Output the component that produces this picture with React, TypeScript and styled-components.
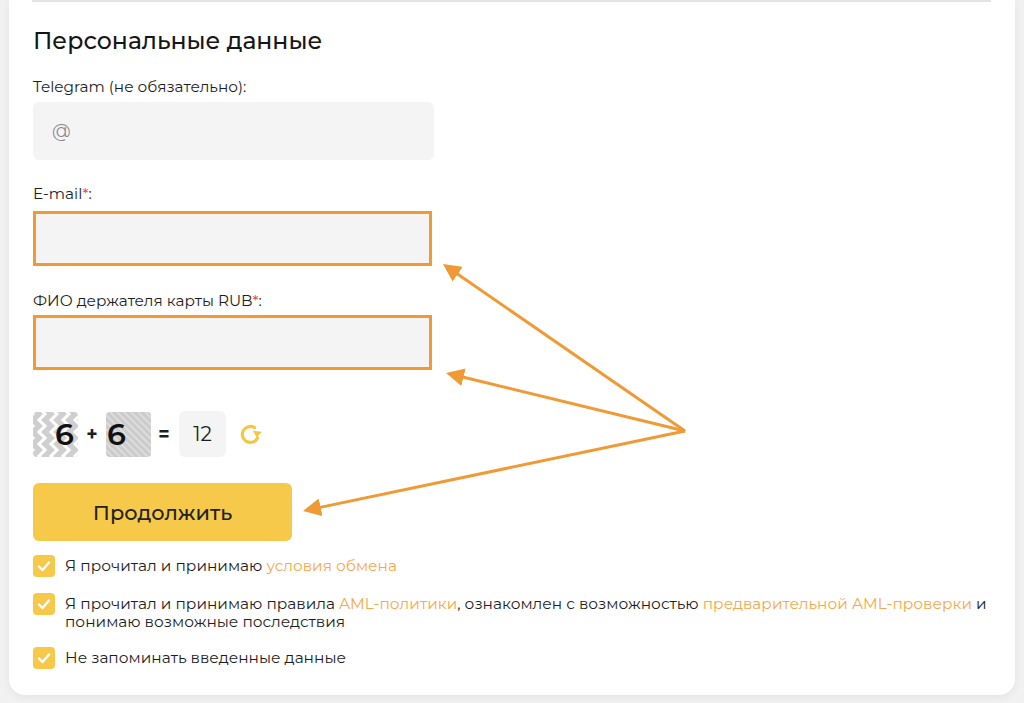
import React from 'react'
import styled, { createGlobalStyle } from 'styled-components'

const GlobalStyle = createGlobalStyle`
  body {
    margin: 0;
    background: #f1f1f1;
    font-family: 'Montserrat', 'Noto Sans', 'Liberation Sans', sans-serif;
    color: #1d1d1d;
  }
`

const Page = styled.div`
  padding: 0 9px 9px 9px;
`

const Card = styled.div`
  position: relative;
  background: #fff;
  border-radius: 0 0 16px 16px;
  box-shadow: 0 2px 8px rgba(0, 0, 0, 0.06);
  padding: 0 24px 26px 23px;
`

const Divider = styled.div`
  height: 2px;
  background: #e3e3e3;
`

const Title = styled.h2`
  margin: 25px 0 0 1px;
  font-size: 23.6px;
  line-height: 28px;
  font-weight: 500;
  color: #161616;
`

const Field = styled.div<{ $top: number }>`
  margin-top: ${(p) => p.$top}px;
  padding-left: 1px;
`

const Label = styled.div<{ $gap: number }>`
  font-size: 15.3px;
  line-height: 18px;
  margin-bottom: ${(p) => p.$gap}px;
`

const Star = styled.span`
  color: #ef3b3b;
`

const Input = styled.div<{ $error?: boolean }>`
  box-sizing: border-box;
  width: ${(p) => (p.$error ? 399 : 401)}px;
  height: ${(p) => (p.$error ? 55 : 58)}px;
  background: #f4f4f4;
  border-radius: ${(p) => (p.$error ? 0 : 6)}px;
  border: ${(p) => (p.$error ? '3px solid #f09a36' : 'none')};
  display: flex;
  align-items: center;
  padding-left: 19px;
  font-size: 18px;
  color: #8a8a8a;
`

const CaptchaRow = styled.div`
  display: flex;
  align-items: center;
  margin-top: 41px;
  margin-left: 1px;
  height: 46px;
`

const CaptchaImg = styled.div<{ $pad: number }>`
  position: relative;
  width: 45px;
  height: 45px;
  border-radius: 4px;
  overflow: hidden;
  display: flex;
  align-items: center;
  padding-left: ${(p) => p.$pad}px;
  box-sizing: border-box;
  font-weight: 600;
  font-size: 30px;
  color: #111;

  svg {
    position: absolute;
    inset: 0;
  }

  span {
    position: relative;
  }
`

const Op = styled.span<{ $w: number; $shift?: number }>`
  width: ${(p) => p.$w}px;
  margin-left: ${(p) => p.$shift ?? 0}px;
  text-align: center;
  font-size: 19px;
  font-weight: 700;
`

const Answer = styled.div`
  width: 47px;
  height: 46px;
  border-radius: 6px;
  background: #f4f4f4;
  display: flex;
  align-items: center;
  justify-content: center;
  font-size: 20px;
  margin-left: 4px;
`

const Refresh = styled.div`
  margin-left: 12px;
  display: flex;
`

const Button = styled.button`
  margin-top: 26px;
  margin-left: 1px;
  width: 259px;
  height: 58px;
  border: none;
  border-radius: 6px;
  background: #f6c94b;
  font-family: inherit;
  font-size: 20.8px;
  font-weight: 500;
  color: #222;
`

const Checks = styled.div`
  margin-top: 14px;
  margin-left: 1px;
  display: flex;
  flex-direction: column;
  gap: 16px;
`

const CheckRow = styled.div`
  display: flex;
  align-items: flex-start;
  gap: 10px;
  font-size: 15.4px;
  line-height: 18px;
`

const Box = styled.div`
  flex: none;
  width: 22px;
  height: 22px;
  border-radius: 4px;
  background: #f6c94b;
  display: flex;
  align-items: center;
  justify-content: center;
`

const CheckText = styled.div`
  padding-top: 2px;
`

const Link = styled.span`
  color: #f5a94a;
`

const Arrows = styled.svg`
  position: absolute;
  left: 0;
  top: 0;
  width: 100%;
  height: 100%;
  pointer-events: none;
`

const Tick = () => (
  <svg width="14" height="12" viewBox="0 0 14 12">
    <path d="M2 6.5 L5.5 10 L12 2.5" fill="none" stroke="#fff" strokeWidth="2.4" strokeLinecap="round" strokeLinejoin="round" />
  </svg>
)

const Chevrons = () => (
  <svg width="45" height="45" viewBox="0 0 45 45">
    <rect width="45" height="45" fill="#cfcfcf" />
    {[-6, 6, 18, 30, 42].map((x) => (
      <path
        key={x}
        d={`M${x} -4 L${x + 6} 2 L${x} 8 L${x + 6} 14 L${x} 20 L${x + 6} 26 L${x} 32 L${x + 6} 38 L${x} 44 L${x + 6} 50`}
        fill="none"
        stroke="#fff"
        strokeWidth="3"
      />
    ))}
  </svg>
)

const Stripes = () => (
  <svg width="45" height="45" viewBox="0 0 45 45">
    <rect width="45" height="45" fill="#cbcbcb" />
    {Array.from({ length: 14 }).map((_, i) => (
      <line key={i} x1={i * 7 - 45} y1={0} x2={i * 7} y2={45} stroke="#dcdcdc" strokeWidth="2" />
    ))}
  </svg>
)

const RefreshIcon = () => (
  <svg width="26" height="24" viewBox="0 0 26 24">
    <path d="M19.5 16 A8 8 0 1 1 16.5 5.6" fill="none" stroke="#f6c63f" strokeWidth="3.2" strokeLinecap="round" />
    <path d="M14.5 9.5 L23.5 9 L19.5 15.5 Z" fill="#f6c63f" transform="rotate(10 19 11)" />
  </svg>
)

export default function App() {
  return (
    <Page>
      <GlobalStyle />
      <Card>
        <Divider />
        <Title>Персональные данные</Title>

        <Field $top={23}>
          <Label $gap={6}>Telegram (не обязательно):</Label>
          <Input>@</Input>
        </Field>

        <Field $top={25}>
          <Label $gap={8}>
            E-mail<Star>*</Star>:
          </Label>
          <Input $error />
        </Field>

        <Field $top={26}>
          <Label $gap={5}>
            ФИО держателя карты RUB<Star>*</Star>:
          </Label>
          <Input $error />
        </Field>

        <CaptchaRow>
          <CaptchaImg $pad={22}>
            <Chevrons />
            <span>6</span>
          </CaptchaImg>
          <Op $w={28}>+</Op>
          <CaptchaImg $pad={1}>
            <Stripes />
            <span>6</span>
          </CaptchaImg>
          <Op $w={22} $shift={2}>
            =
          </Op>
          <Answer>12</Answer>
          <Refresh>
            <RefreshIcon />
          </Refresh>
        </CaptchaRow>

        <Button>Продолжить</Button>

        <Checks>
          <CheckRow>
            <Box>
              <Tick />
            </Box>
            <CheckText>
              Я прочитал и принимаю <Link>условия обмена</Link>
            </CheckText>
          </CheckRow>
          <CheckRow>
            <Box>
              <Tick />
            </Box>
            <CheckText>
              Я прочитал и принимаю правила <Link>AML-политики</Link>, ознакомлен с возможностью{' '}
              <Link>предварительной AML-проверки</Link> и
              <br />
              понимаю возможные последствия
            </CheckText>
          </CheckRow>
          <CheckRow>
            <Box>
              <Tick />
            </Box>
            <CheckText>Не запоминать введенные данные</CheckText>
          </CheckRow>
        </Checks>

        <Arrows>
          <defs>
            <marker id="head" markerWidth="6" markerHeight="6" refX="1" refY="3" orient="auto" markerUnits="strokeWidth">
              <path d="M0 0 L6 3 L0 6 Z" fill="#f09a36" />
            </marker>
          </defs>
          <g stroke="#f09a36" strokeWidth="3" fill="none" markerEnd="url(#head)">
            <line x1="676" y1="431" x2="446.3" y2="272.5" />
            <line x1="676" y1="431" x2="451.6" y2="376.5" />
            <line x1="676" y1="431" x2="308.7" y2="507.9" />
          </g>
        </Arrows>
      </Card>
    </Page>
  )
}
